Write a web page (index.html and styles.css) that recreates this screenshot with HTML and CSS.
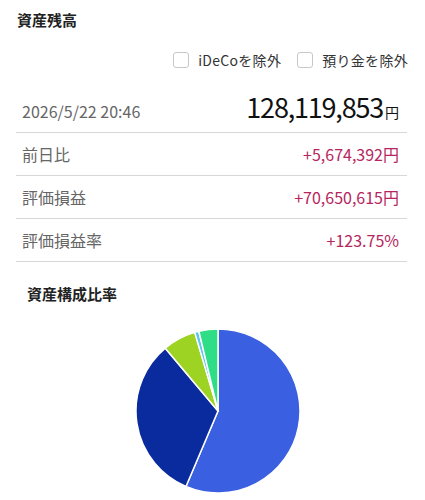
FILE: index.html
```html
<!DOCTYPE html>
<html lang="ja">
<head>
    <meta charset="UTF-8">
    <meta name="viewport" content="width=device-width, initial-scale=1.0">
    <title>資産残高</title>
    <link rel="stylesheet" href="styles.css">
</head>
<body>
    <h2 class="title">資産残高</h2>

    <div class="filters">
        <label class="check"><span class="box"></span>iDeCoを除外</label>
        <label class="check"><span class="box"></span>預り金を除外</label>
    </div>

    <div class="summary">
        <div class="row total">
            <span class="date">2026/5/22 20:46</span>
            <span class="amount">128,119,853<small>円</small></span>
        </div>
        <div class="row">
            <span class="label">前日比</span>
            <span class="value">+5,674,392円</span>
        </div>
        <div class="row">
            <span class="label">評価損益</span>
            <span class="value">+70,650,615円</span>
        </div>
        <div class="row">
            <span class="label">評価損益率</span>
            <span class="value">+123.75%</span>
        </div>
    </div>

    <h3 class="subtitle">資産構成比率</h3>

    <div class="chart">
        <svg width="168" height="168" viewBox="-84 -84 168 168">
            <g stroke="#fff" stroke-width="1.5" stroke-linejoin="round">
                <path fill="#3a5fe0" d="M0 0 L0 -82 A82 82 0 1 1 -32.04 75.48 Z"/>
                <path fill="#0a2b9e" d="M0 0 L-32.04 75.48 A82 82 0 0 1 -52.71 -62.82 Z"/>
                <path fill="#9dd322" d="M0 0 L-52.71 -62.82 A82 82 0 0 1 -23.29 -78.62 Z"/>
                <path fill="#5cc6ee" d="M0 0 L-23.29 -78.62 A82 82 0 0 1 -19.14 -79.74 Z"/>
                <path fill="#2fdd86" d="M0 0 L-19.14 -79.74 A82 82 0 0 1 0 -82 Z"/>
            </g>
        </svg>
    </div>
</body>
</html>
```

FILE: styles.css
```css
body {
    margin: 0;
    background: #fff;
    color: #333;
    font-family: "Noto Sans CJK JP", "Noto Sans", sans-serif;
}

.title {
    margin: 0;
    padding: 10px 17px 0;
    font-size: 15px;
    line-height: 20px;
    font-weight: bold;
    color: #222;
}

.filters {
    display: flex;
    justify-content: flex-end;
    gap: 16px;
    padding: 20px 17px 0 0;
}
.check {
    display: flex;
    align-items: center;
    gap: 9px;
    font-size: 14px;
    line-height: 20px;
    letter-spacing: 0.3px;
    color: #333;
}
.box {
    width: 14px;
    height: 14px;
    border: 1px solid #c8c8c8;
    border-radius: 3px;
    background: #fff;
}

.summary {
    margin: 17px 18px 0 16px;
}
.row {
    display: flex;
    justify-content: space-between;
    align-items: center;
    height: 42px;
    padding: 0 8px 0 6px;
    border-bottom: 1px solid #d8d8d8;
}
.row.total {
    height: 45px;
    align-items: baseline;
}
.date {
    font-size: 16px;
    color: #666;
}
.amount {
    font-size: 27px;
    color: #111;
    letter-spacing: -1.2px;
}
.amount small {
    font-size: 14px;
    margin-left: 2px;
    letter-spacing: 0;
}
.label {
    font-size: 16px;
    color: #666;
}
.value {
    font-size: 16px;
    color: #b5265e;
}

.subtitle {
    margin: 0;
    padding: 22px 0 0 27px;
    font-size: 15px;
    line-height: 20px;
    font-weight: bold;
    color: #222;
}

.chart {
    display: flex;
    padding: 23px 0 0 134px;
}
```
